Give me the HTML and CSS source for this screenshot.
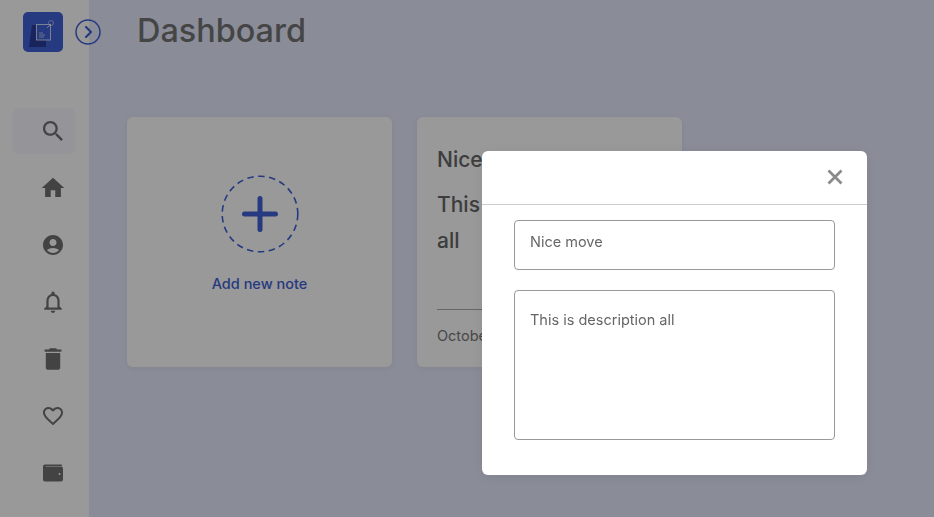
FILE: index.html
```html
<!DOCTYPE html>
<html lang="en">
<head>
<meta charset="utf-8">
<title>Dashboard</title>
<link rel="stylesheet" href="styles.css">
</head>
<body>
<div class="app">
  <aside class="sidebar">
    <div class="brand">
      <div class="logo">
        <svg viewBox="0 0 40 40" width="40" height="40" fill="none">
          <path d="M9 13h14v22H6z" fill="#2b3c9a"/>
          <rect x="13.500" y="12.500" width="14" height="15.500" fill="#3f61d5" stroke="#fff" stroke-opacity="0.750" stroke-width="1"/>
          <path d="M16 21h4M16 23h6M16 25h5" stroke="#fff" stroke-opacity="0.750" stroke-width="0.800"/>
          <circle cx="28" cy="11" r="2.500" stroke="#fff" stroke-opacity="0.600" stroke-width="0.800"/>
          <path d="M24 16l4-4" stroke="#fff" stroke-opacity="0.750" stroke-width="1"/>
        </svg>
      </div>
      <button class="toggle" type="button" aria-label="Expand">
        <svg viewBox="0 0 26 26" width="26" height="26" fill="none">
          <circle cx="13" cy="13" r="12" stroke="#3f61d5" stroke-width="1.500"/>
          <path d="M11 8l5 5-5 5" stroke="#3f61d5" stroke-width="2.200" stroke-linecap="round" stroke-linejoin="round"/>
        </svg>
      </button>
    </div>
    <nav class="nav">
      <a class="nav-item nav-item-active"><svg class="icon" viewBox="-0.500 -0.500 24.600 24.600"><path d="M15.500 14h-.79l-.28-.27C15.410 12.590 16 11.110 16 9.500 16 5.910 13.090 3 9.500 3S3 5.910 3 9.500 5.910 16 9.500 16c1.610 0 3.090-.59 4.230-1.570l.27.28v.79l5 4.990L20.490 19l-4.990-5zm-6 0C7.010 14 5 11.990 5 9.500S7.010 5 9.500 5 14 7.010 14 9.500 11.990 14 9.500 14z"/></svg></a>
      <a class="nav-item"><svg class="icon" viewBox="-0.400 -0.400 24.800 24.800"><path d="M10 20v-6h4v6h5v-8h3L12 3 2 12h3v8z"/></svg></a>
      <a class="nav-item"><svg class="icon" viewBox="-2 -2 28 28"><path d="M12 2C6.480 2 2 6.480 2 12s4.480 10 10 10 10-4.480 10-10S17.520 2 12 2zm0 4c1.930 0 3.500 1.570 3.500 3.500S13.930 13 12 13s-3.500-1.570-3.500-3.500S10.070 6 12 6zm0 14c-2.030 0-4.430-.82-6.140-2.880C7.550 15.800 9.680 15 12 15s4.450.8 6.140 2.120C16.430 19.180 14.030 20 12 20z"/></svg></a>
      <a class="nav-item"><svg class="icon" viewBox="-0.700 -0.700 25.400 25.400"><path d="M12 22c1.100 0 2-.9 2-2h-4c0 1.100.9 2 2 2zm6-6v-5c0-3.070-1.630-5.640-4.500-6.320V4c0-.83-.67-1.500-1.500-1.500s-1.500.67-1.500 1.500v.68C7.640 5.360 6 7.920 6 11v5l-2 2v1h16v-1l-2-2zm-2 1H8v-6c0-2.480 1.510-4.500 4-4.500s4 2.020 4 4.500v6z"/></svg></a>
      <a class="nav-item"><svg class="icon" viewBox="0.350 0.350 23.300 23.300"><path d="M6 19c0 1.100.9 2 2 2h8c1.100 0 2-.9 2-2V7H6v12zM19 4h-3.500l-1-1h-5l-1 1H5v2h14V4z"/></svg></a>
      <a class="nav-item"><svg class="icon" viewBox="-2 -2 28 28"><path d="M16.500 3c-1.740 0-3.410.81-4.500 2.090C10.910 3.810 9.240 3 7.500 3 4.420 3 2 5.420 2 8.500c0 3.780 3.400 6.860 8.550 11.540L12 21.350l1.450-1.320C18.600 15.360 22 12.280 22 8.500 22 5.420 19.580 3 16.500 3zm-4.400 15.550l-.1.100-.1-.1C7.140 14.240 4 11.390 4 8.500 4 6.500 5.500 5 7.500 5c1.540 0 3.040.99 3.570 2.360h1.870C13.460 5.990 14.960 5 16.500 5c2 0 3.500 1.500 3.500 3.500 0 2.890-3.140 5.740-7.900 10.050z"/></svg></a>
      <a class="nav-item"><svg class="icon" viewBox="0 0 28 28"><path fill-rule="evenodd" d="M6 5.500C4.900 5.500 4 6.400 4 7.500v13c0 1.100.9 2 2 2h16c1.100 0 2-.9 2-2v-11c0-1.100-.9-2-2-2H6.500V7H23V6.500c0-.6-.4-1-1-1H6zM20.500 14a1 1 0 1 0 0 2 1 1 0 0 0 0-2z"/></svg></a>
    </nav>
  </aside>
  <main class="main">
    <h1 class="title">Dashboard</h1>
    <section class="cards">
      <article class="card card-add">
        <div class="add-circle">
          <svg viewBox="0 0 78 78" width="78" height="78" fill="none">
            <circle cx="39" cy="39" r="37.800" stroke="#3f61d5" stroke-width="1.600" stroke-dasharray="6.500 4.500"/>
            <path d="M39 23.500v31M23.500 39h31" stroke="#3f61d5" stroke-width="5" stroke-linecap="round"/>
          </svg>
        </div>
        <p class="add-label">Add new note</p>
      </article>
      <article class="card card-note">
        <h2 class="note-title">Nice move</h2>
        <p class="note-body">This is description all</p>
        <footer class="note-footer">October 12, 2021</footer>
      </article>
    </section>
  </main>
</div>
<div class="overlay">
  <div class="modal">
    <header class="modal-head">
      <button class="close" type="button" aria-label="Close">
        <svg viewBox="0 0 16 16" width="16" height="16" fill="none"><path d="M1.500 1.500l13 13M14.500 1.500l-13 13" stroke="#8a8a8a" stroke-width="2.800"/></svg>
      </button>
    </header>
    <form class="modal-body">
      <div class="field field-title">Nice move</div>
      <div class="field field-desc">This is description all</div>
    </form>
  </div>
</div>
</body>
</html>
```
FILE: styles.css
```css
* { box-sizing: border-box; }
html, body { height: 100%; }
body {
  margin: 0;
  overflow: hidden;
  font-family: Inter, "Noto Sans", "Liberation Sans", sans-serif;
  color: #2f2f2f;
}
.app { display: flex; height: 517px; background: #e6ebfd; }

.sidebar { flex: 0 0 89px; width: 89px; min-width: 0; background: #fff; }
.brand { display: flex; align-items: center; width: 110px; padding: 12px 0 0 23px; gap: 12px; }
.logo { flex: none; width: 40px; height: 40px; border-radius: 5px; background: #3f61d5; overflow: hidden; }
.logo svg { display: block; }
.toggle { width: 26px; height: 26px; padding: 0; border: 0; background: transparent; flex: none; }
.toggle svg { display: block; }
.nav { display: flex; flex-direction: column; gap: 11px; margin-top: 56px; padding: 0 14px 0 13px; }
.nav-item { display: flex; align-items: center; height: 46px; padding-left: 26px; border-radius: 6px; }
.nav-item-active { background: #f7f7ff; }
.icon { width: 28px; height: 28px; fill: #707070; flex: none; }

.main { flex: 1; padding: 0 0 0 48px; }
.title { margin: 0; padding-top: 11px; font-size: 32.400px; line-height: 40px; font-weight: 500; color: #747474; }
.cards { display: flex; gap: 25px; margin: 66px 0 0 -10px; }
.card { width: 265px; height: 250px; background: #fff; border-radius: 6px; box-shadow: 0 1px 6px rgba(0, 0, 0, 0.06); }
.card-add { display: flex; flex-direction: column; align-items: center; padding-top: 58px; }
.add-circle { width: 78px; height: 78px; }
.add-circle svg { display: block; }
.add-label { margin: 22px 0 0; font-size: 14.500px; line-height: 18px; font-weight: 500; color: #3f61d5; }
.card-note { display: flex; flex-direction: column; padding: 26px 20px 0; overflow: hidden; }
.note-title { margin: 0; font-size: 21px; line-height: 34px; font-weight: 500; color: #666; }
.note-body { margin: 10px 0 0; max-width: 200px; height: 122px; font-size: 21px; line-height: 36px; font-weight: 500; color: #666; }
.note-footer { padding-top: 16px; border-top: 1px solid #aaa; font-size: 14.500px; line-height: 20px; color: #777; }

.overlay { position: fixed; inset: 0; background: rgba(0, 0, 0, 0.4); }
.modal {
  position: absolute;
  left: 482px;
  top: 151px;
  width: 385px;
  height: 324px;
  background: #fff;
  border-radius: 6px;
  box-shadow: 0 2px 14px rgba(0, 0, 0, 0.08);
}
.modal-head { display: flex; justify-content: flex-end; align-items: center; height: 54px; padding: 0 24px 1px 0; border-bottom: 1px solid #ccc; }
.close { padding: 0; border: 0; background: transparent; width: 16px; height: 16px; }
.close svg { display: block; }
.modal-body { display: flex; flex-direction: column; gap: 20px; padding: 15px 32px 0; }
.field { width: 321px; border: 1px solid #999; border-radius: 4px; padding: 0 15px; font-size: 14.500px; line-height: 20px; color: #666; }
.field-title { height: 50px; padding-top: 11px; }
.field-desc { height: 150px; padding-top: 19px; }
```
